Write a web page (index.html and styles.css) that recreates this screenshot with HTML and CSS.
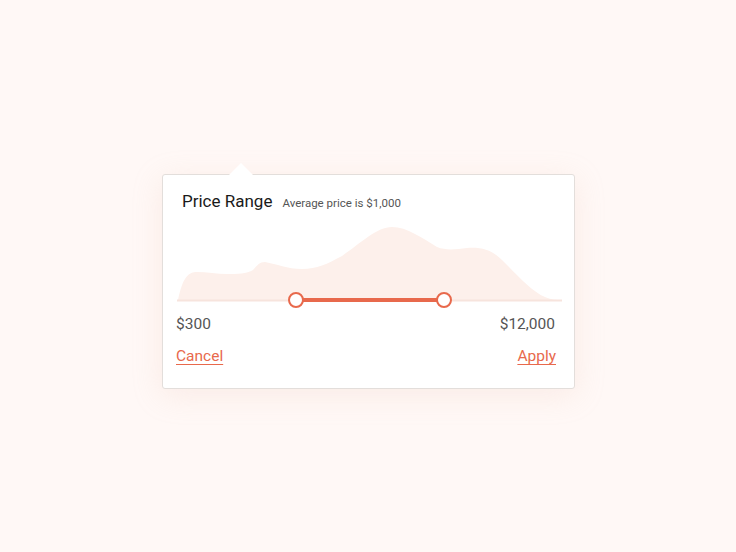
FILE: index.html
```html
<!DOCTYPE html>
<html>
<head>
<meta charset="utf-8">
<link rel="stylesheet" href="styles.css">
</head>
<body>
<div class="card">
  <div class="arrow"></div>
  <div class="head">
    <span class="title">Price Range</span>
    <span class="sub">Average price is $1,000</span>
  </div>
  <div class="chart">
    <svg width="386" height="90" viewBox="0 0 386 90">
      <path class="area" d="M1 80 C6 56 12 52 20 52 C30 52 40 54 50 54 C60 54 70 54 76 50 C80 46 82 42 88 42 C100 44 110 49 125 49 C140 49 150 44 165 36 C185 22 200 7 215 7 C230 7 245 18 260 27 C270 31 280 29 290 28 C305 27 315 30 325 40 C340 55 355 72 368 77 C375 80 380 80 384 80 Z"/>
      <line class="track" x1="0" y1="80.5" x2="385" y2="80.5"/>
      <line class="active" x1="119" y1="80" x2="267" y2="80"/>
      <circle class="handle" cx="119" cy="80" r="7"/>
      <circle class="handle" cx="267" cy="80" r="7"/>
    </svg>
  </div>
  <div class="labels">
    <span>$300</span>
    <span>$12,000</span>
  </div>
  <div class="actions">
    <a class="link" href="#">Cancel</a>
    <a class="link apply" href="#">Apply</a>
  </div>
</div>
</body>
</html>
```
FILE: styles.css
```css
html, body {
  margin: 0;
  padding: 0;
}
body {
  width: 736px;
  height: 552px;
  background: #fff8f6;
  font-family: Roboto, "Noto Sans", sans-serif;
  display: flex;
  flex-direction: column;
  align-items: flex-start;
  box-sizing: border-box;
  padding: 174px 0 0 162px;
}
.card {
  position: relative;
  width: 413px;
  height: 215px;
  box-sizing: border-box;
  background: #fff;
  border: 1px solid #e3dedb;
  border-radius: 3px;
  box-shadow: 0 6px 30px rgba(230, 190, 175, 0.22);
  padding: 0 18px 0 13px;
  display: flex;
  flex-direction: column;
}
.arrow {
  position: absolute;
  left: 66px;
  top: -12px;
  width: 0;
  height: 0;
  border-left: 12px solid transparent;
  border-right: 12px solid transparent;
  border-bottom: 12px solid #fff;
}
.head {
  display: flex;
  align-items: baseline;
  gap: 10px;
  padding: 16px 0 0 6px;
  height: 22px;
}
.title {
  font-size: 17px;
  color: #1a1a1a;
}
.sub {
  font-size: 11.5px;
  color: #555;
}
.chart {
  margin-top: 7px;
  height: 90px;
  margin-left: 1px;
}
.chart svg {
  display: block;
}
.area {
  fill: #fdf0eb;
}
.track {
  stroke: #f7e4dd;
  stroke-width: 2;
}
.active {
  stroke: #e8694c;
  stroke-width: 4;
}
.handle {
  fill: #fff;
  stroke: #e8694c;
  stroke-width: 2;
}
.labels {
  display: flex;
  justify-content: space-between;
  font-size: 15.5px;
  color: #555;
  margin-top: 5px;
  padding-right: 1px;
}
.actions {
  display: flex;
  justify-content: space-between;
  margin-top: 14px;
}
.link {
  font-size: 15.5px;
  color: #e8694c;
  text-decoration: underline;
  text-underline-offset: 3px;
  text-decoration-thickness: 1px;
}
```
